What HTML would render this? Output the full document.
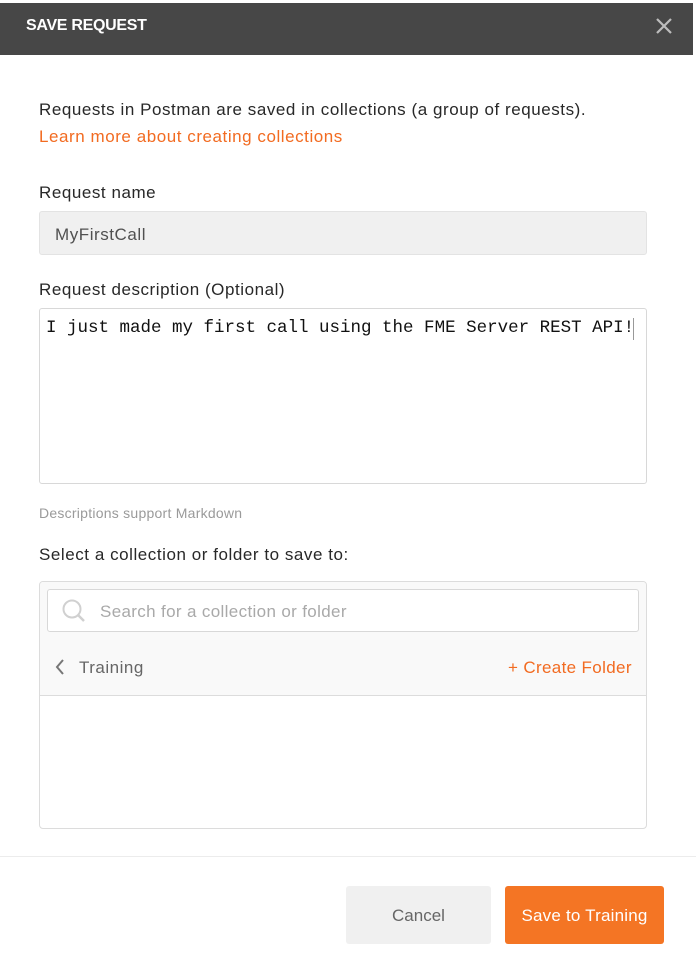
<!DOCTYPE html>
<html><head><style>
*{margin:0;padding:0;box-sizing:border-box}
body{width:696px;height:971px;background:#fff;font-family:"Liberation Sans",sans-serif;position:relative;overflow:hidden;color:#282828}
.abs{position:absolute;white-space:nowrap}
.t{font-size:17px;letter-spacing:0.55px}
.hdr{position:absolute;left:0;top:3px;width:693px;height:52px;background:#474747}
</style></head><body>
<div class="hdr"></div>
<div class="abs" style="left:26px;top:17px;color:#fff;font-size:16px;font-weight:bold;letter-spacing:-0.3px">SAVE REQUEST</div>
<svg class="abs" style="left:655px;top:17px" width="18" height="18"><path d="M2 2L16 16M16 2L2 16" stroke="#bdbdbd" stroke-width="2.2"/></svg>
<div class="abs t" style="left:39px;top:100px">Requests in Postman are saved in collections (a group of requests).</div>
<div class="abs t" style="left:39px;top:127px;color:#f26b21">Learn more about creating collections</div>
<div class="abs t" style="left:39px;top:183px">Request name</div>
<div class="abs" style="left:39px;top:211px;width:608px;height:44px;background:#f0f0f0;border:1px solid #e3e3e3;border-radius:3px"></div>
<div class="abs t" style="left:55px;top:225px;color:#505050">MyFirstCall</div>
<div class="abs t" style="left:39px;top:280px">Request description (Optional)</div>
<div class="abs" style="left:39px;top:308px;width:608px;height:176px;border:1px solid #d8d8d8;border-radius:3px"></div>
<div class="abs" style="left:46px;top:318px;font-family:'Liberation Mono',monospace;font-size:17.5px;color:#111">I just made my first call using the FME Server REST API!</div>
<div class="abs" style="left:633px;top:318px;width:1px;height:22px;background:#999"></div>
<div class="abs" style="left:39px;top:505px;font-size:14px;letter-spacing:0.25px;color:#9a9a9a">Descriptions support Markdown</div>
<div class="abs t" style="left:39px;top:545px">Select a collection or folder to save to:</div>
<div class="abs" style="left:39px;top:581px;width:608px;height:248px;border:1px solid #dcdcdc;border-radius:4px;overflow:hidden">
 <div style="height:114px;background:#f9f9f9;border-bottom:1px solid #dcdcdc"></div>
</div>
<div class="abs" style="left:47px;top:589px;width:592px;height:43px;background:#fff;border:1px solid #d8d8d8;border-radius:3px"></div>
<svg class="abs" style="left:61px;top:598px" width="26" height="26"><circle cx="11" cy="11" r="8.5" fill="none" stroke="#d0d0d0" stroke-width="2"/><path d="M17 17L23 23" stroke="#d0d0d0" stroke-width="2.5"/></svg>
<div class="abs" style="left:100px;top:602px;font-size:17px;letter-spacing:0.35px;color:#a9a9a9">Search for a collection or folder</div>
<svg class="abs" style="left:54px;top:658px" width="12" height="18"><path d="M9 2L3 9L9 16" fill="none" stroke="#777" stroke-width="2"/></svg>
<div class="abs" style="left:79px;top:658px;font-size:17px;letter-spacing:0.5px;color:#666">Training</div>
<div class="abs" style="left:508px;top:658px;font-size:17px;letter-spacing:0.35px;color:#f26b21">+ Create Folder</div>
<div class="abs" style="left:0;top:856px;width:696px;height:1px;background:#ececec"></div>
<div class="abs" style="left:346px;top:886px;width:145px;height:58px;background:#f0f0f0;border-radius:3px;font-size:17px;color:#666;text-align:center;line-height:60px">Cancel</div>
<div class="abs" style="left:505px;top:886px;width:159px;height:58px;background:#f47524;border-radius:3px;font-size:17px;letter-spacing:0.2px;color:#fff;text-align:center;line-height:60px">Save to Training</div>
</body></html>
